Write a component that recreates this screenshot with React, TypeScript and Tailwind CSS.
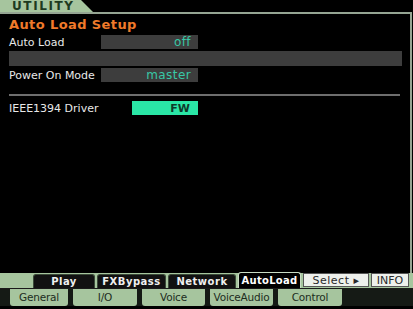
import React from 'react'

const font = { fontFamily: '"DejaVu Sans", "Liberation Sans", sans-serif' }

const topTabs = [
  { label: 'Play', w: 'w-[62px]' },
  { label: 'FXBypass', w: 'w-[69px]' },
  { label: 'Network', w: 'w-[68px]' },
]

const bottomTabs = [
  { label: 'General', w: 'w-[58px]' },
  { label: 'I/O', w: 'w-[64px]' },
  { label: 'Voice', w: 'w-[63px]' },
  { label: 'VoiceAudio', w: 'w-[63px]' },
  { label: 'Control', w: 'w-[64px]' },
]

function Field({ label, value }: { label: string; value: string }) {
  return (
    <div className="flex items-center h-[14px]">
      <span className="w-[92px] text-[11px] text-[#e8e8e8] leading-none">{label}</span>
      <div className="w-[97px] h-[14px] bg-[#3d3d3d] flex items-center justify-end pr-[7px]">
        <span className="text-[12px] text-[#38c8a6] tracking-[0.4px] leading-none">{value}</span>
      </div>
    </div>
  )
}

export default function App() {
  return (
    <div className="w-[413px] h-[309px] bg-black flex flex-col overflow-hidden select-none" style={font}>
      {/* Header tab */}
      <div className="h-[12px] flex">
        <div className="w-[93px] h-[12px] bg-[#a6c59e] [clip-path:polygon(0_0,81px_0,93px_100%,0_100%)] flex items-center pl-[12px]">
          <span className="text-[12px] font-bold text-[#1d3a1f] tracking-[1.6px] leading-none">UTILITY</span>
        </div>
      </div>

      {/* Main panel */}
      <div className="h-[261px] border-t-2 border-r-2 border-[#95a593] mr-[1px] pl-[9px] flex flex-col">
        <div className="mt-[4px] h-[13px] flex items-center">
          <span className="text-[13px] font-bold text-[#f07a2a] tracking-[0.4px] leading-none">Auto Load Setup</span>
        </div>
        <div className="mt-[4px]">
          <Field label="Auto Load" value="off" />
        </div>
        <div className="mt-[2px] h-[15px] w-[393px] bg-[#3d3d3d]" />
        <div className="mt-[2px]">
          <Field label="Power On Mode" value="master" />
        </div>
        <div className="mt-[12px] h-[2px] w-[391px] bg-[#6e6e6e]" />
        <div className="mt-[5px] flex items-center h-[14px]">
          <span className="w-[123px] text-[11px] text-[#e8e8e8] leading-none">IEEE1394 Driver</span>
          <div className="w-[66px] h-[14px] bg-[#2ae6a6] flex items-center justify-end pr-[8px]">
            <span className="text-[11px] text-[#0e3a2a] font-bold leading-none">FW</span>
          </div>
        </div>
      </div>

      {/* Tab rows */}
      <div className="h-[15px] bg-[#a6c59e] flex items-end pl-[33px] gap-[2px]">
        {topTabs.map((t) => (
          <div
            key={t.label}
            className={`${t.w} h-[14px] bg-[#111] rounded-t-[3px] border border-b-0 border-[#3a4a38] flex items-center justify-center`}
          >
            <span className="text-[10px] font-bold text-[#f0f0f0] tracking-[0.5px] leading-none">{t.label}</span>
          </div>
        ))}
        <div className="w-[63px] h-[16px] bg-black rounded-t-[3px] border border-b-0 border-[#c8dcc4] flex items-center justify-center">
          <span className="text-[10px] font-bold text-white tracking-[0.3px] leading-none">AutoLoad</span>
        </div>
        <div className="w-[66px] h-[14px] bg-[#eef0ec] border border-[#555] flex items-center justify-center mb-[1px]">
          <span className="text-[11px] text-[#2a2a2a] tracking-[0.5px] leading-none">Select ▸</span>
        </div>
        <div className="w-[38px] h-[14px] bg-[#eef0ec] border border-[#555] flex items-center justify-center mb-[1px]">
          <span className="text-[11px] text-[#2a2a2a] leading-none">INFO</span>
        </div>
      </div>
      <div className="h-[1px] bg-[#1a1a1a]" />
      <div className="h-[17px] bg-[#151a15] flex pl-[10px] gap-[5px]">
        {bottomTabs.map((t) => (
          <div
            key={t.label}
            className={`${t.w} h-[17px] bg-[#a6c59e] rounded-b-[3px] flex items-center justify-center overflow-hidden`}
          >
            <span className="text-[10.5px] text-[#1d2d1d] tracking-[-0.2px] leading-none whitespace-nowrap">{t.label}</span>
          </div>
        ))}
      </div>
    </div>
  )
}
